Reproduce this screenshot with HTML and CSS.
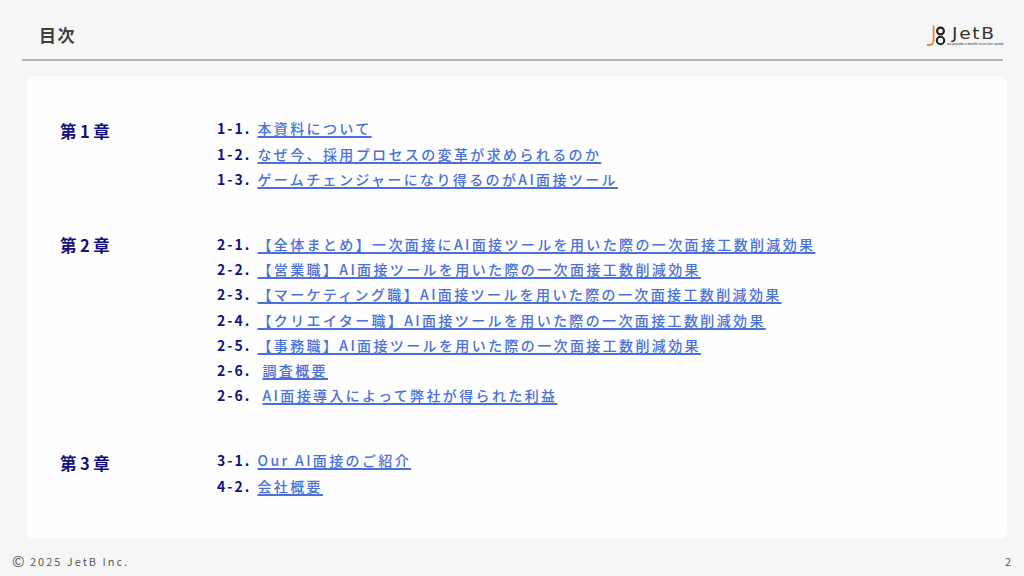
FILE: index.html
```html
<!DOCTYPE html>
<html lang="ja">
<head>
<meta charset="utf-8">
<title>目次</title>
<link rel="stylesheet" href="styles.css">
</head>
<body>
<div class="slide">
  <header class="header">
    <h1 class="title">目次</h1>
    <div class="logo">
      <svg class="logo-mark" width="20" height="22" viewBox="0 0 20 22" aria-hidden="true">
        <path d="M6.6 0.5V14.5Q6.6 20 2.5 20H0" fill="none" stroke="#e8872a" stroke-width="1.8"/>
        <circle cx="13.5" cy="6" r="3.4" fill="none" stroke="#222" stroke-width="2.1"/>
        <circle cx="13.5" cy="15.5" r="3.7" fill="none" stroke="#222" stroke-width="2.1"/>
      </svg>
      <div class="logo-text">
        <span class="logo-name">JetB</span>
        <span class="logo-tag">we provide a benefit at on-line speed</span>
      </div>
    </div>
  </header>
  <main class="card">
    <section class="chapter ch1">
      <h2 class="chapter-name">第<span class="digit">1</span>章</h2>
      <ol class="toc">
        <li><span class="num">1-1.</span><a href="#">本資料について</a></li>
        <li><span class="num">1-2.</span><a href="#">なぜ今、採用プロセスの変革が求められるのか</a></li>
        <li><span class="num">1-3.</span><a href="#">ゲームチェンジャーになり得るのがAI面接ツール</a></li>
      </ol>
    </section>
    <section class="chapter ch2">
      <h2 class="chapter-name">第<span class="digit">2</span>章</h2>
      <ol class="toc">
        <li><span class="num">2-1.</span><a href="#">【全体まとめ】一次面接にAI面接ツールを用いた際の一次面接工数削減効果</a></li>
        <li><span class="num">2-2.</span><a href="#">【営業職】AI面接ツールを用いた際の一次面接工数削減効果</a></li>
        <li><span class="num">2-3.</span><a href="#">【マーケティング職】AI面接ツールを用いた際の一次面接工数削減効果</a></li>
        <li><span class="num">2-4.</span><a href="#">【クリエイター職】AI面接ツールを用いた際の一次面接工数削減効果</a></li>
        <li><span class="num">2-5.</span><a href="#">【事務職】AI面接ツールを用いた際の一次面接工数削減効果</a></li>
        <li><span class="num">2-6.</span><a class="shift" href="#">調査概要</a></li>
        <li><span class="num">2-6.</span><a class="shift" href="#">AI面接導入によって弊社が得られた利益</a></li>
      </ol>
    </section>
    <section class="chapter ch3">
      <h2 class="chapter-name">第<span class="digit">3</span>章</h2>
      <ol class="toc">
        <li><span class="num">3-1.</span><a href="#">Our AI面接のご紹介</a></li>
        <li><span class="num">4-2.</span><a href="#">会社概要</a></li>
      </ol>
    </section>
  </main>
  <footer class="footer">
    <span class="copy"><span class="copy-mark">©</span> 2025 JetB Inc.</span>
    <span class="page">2</span>
  </footer>
</div>
</body>
</html>
```
FILE: styles.css
```css
* { box-sizing: border-box; }
html, body { margin: 0; padding: 0; }
body {
  width: 1024px;
  height: 576px;
  overflow: hidden;
  background: #f6f6f6;
  font-family: "Noto Sans CJK JP", "Noto Sans", sans-serif;
}
.slide {
  width: 1024px;
  height: 576px;
  display: flex;
  flex-direction: column;
}
.header {
  height: 61px;
  margin: 0 21px 0 22px;
  padding: 0 0 0 17px;
  border-bottom: 2px solid #b4b4b4;
  display: flex;
  align-items: flex-start;
  justify-content: space-between;
}
.title {
  margin: 22px 0 0;
  font-size: 17px;
  line-height: 26px;
  font-weight: 700;
  letter-spacing: 1.4px;
  color: #404040;
}
.logo {
  display: flex;
  align-items: flex-start;
  margin-top: 25px;
}
.logo-mark { display: block; }
.logo-text {
  display: flex;
  flex-direction: column;
  width: 56px;
}
.logo-name {
  font-family: "DejaVu Sans", sans-serif;
  font-size: 15.5px;
  line-height: 16px;
  letter-spacing: 1.4px;
  color: #333;
  margin-left: 5px;
  padding-top: 1px;
  transform: scaleX(1.2);
  transform-origin: left center;
}
.logo-tag {
  font-family: "Liberation Sans", sans-serif;
  font-size: 3.45px;
  line-height: 5px;
  white-space: nowrap;
  color: #333;
}
.card {
  margin: 15px 17px 0 26px;
  height: 463px;
  padding: 40.3px 0 0 34px;
  background: #fefefe;
  border-radius: 8px;
}
.chapter {
  display: grid;
  grid-template-columns: 157px 1fr;
}
.ch2, .ch3 { margin-top: 39.5px; }
.chapter-name {
  margin: 0;
  font-size: 16.5px;
  line-height: 28px;
  font-weight: 700;
  color: #12127f;
}
.ch1 .chapter-name, .ch3 .chapter-name { padding-top: 1px; }
.ch2 .chapter-name { margin-top: -1px; }
.digit { margin: 0 3.5px; }
.toc {
  list-style: none;
  margin: 0;
  padding: 0;
}
.toc li {
  height: 25.3px;
  line-height: 25.3px;
  font-size: 14px;
  letter-spacing: 2px;
  font-weight: 700;
  white-space: nowrap;
}
.num {
  display: inline-block;
  width: 40.5px;
  color: #12127f;
}
.toc a {
  color: #4a70dc;
  font-weight: 500;
  letter-spacing: 2.37px;
  text-decoration: underline;
  text-decoration-thickness: 1.5px;
  text-underline-offset: 2px;
}
.toc a.shift { margin-left: 5px; }
.footer {
  flex: 1;
  padding: 6px 13px 0 12px;
  display: flex;
  align-items: center;
  justify-content: space-between;
  font-size: 11px;
  letter-spacing: 2px;
  color: #595959;
}
.copy-mark { font-size: 15px; line-height: 14px; letter-spacing: 1px; vertical-align: -1px; }
.page { letter-spacing: 0; }
```
